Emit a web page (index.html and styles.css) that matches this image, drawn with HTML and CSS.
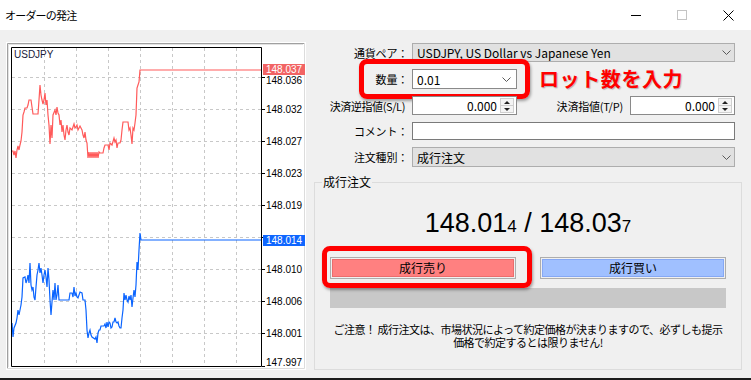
FILE: index.html
```html
<!DOCTYPE html>
<html lang="ja">
<head>
    <meta charset="UTF-8">
    <title>オーダーの発注</title>
    <link rel="stylesheet" href="styles.css">
</head>
<body>
    <div class="titlebar">
        <span class="title">オーダーの発注</span>
        <div class="caption-buttons">
            <span class="cap-btn"><svg width="10" height="10" viewBox="0 0 10 10"><path d="M0 5.5H10" stroke="#000"/></svg></span>
            <span class="cap-btn"><svg width="10" height="10" viewBox="0 0 10 10"><rect x="0.5" y="0.5" width="9" height="9" fill="none" stroke="#c4c4c4"/></svg></span>
            <span class="cap-btn"><svg width="11" height="11" viewBox="0 0 11 11"><path d="M0.5 0.5L10.5 10.5M10.5 0.5L0.5 10.5" stroke="#000"/></svg></span>
        </div>
    </div>

    <div class="content">
        <div class="chart-panel">
            <svg width="300" height="328" viewBox="6 42 300 328">
                <rect x="6" y="42" width="300" height="328" fill="#fff"/>
                <path d="M7.5 368V43.5H304" fill="none" stroke="#a0a0a0"/>
                <path d="M8.5 367V44.5H303" fill="none" stroke="#e3e3e3"/>
                <path d="M304.5 43V368.5H7" fill="none" stroke="#dcdcdc"/>

                <g stroke="#c8c8c8" stroke-dasharray="3 3">
                    <path d="M44.5 48V366M76.5 48V366M108.5 48V366M140.5 48V366M172.5 48V366M204.5 48V366M236.5 48V366"/>
                    <path d="M12 77.5H261M12 109.5H261M12 141.5H261M12 173.5H261M12 205.5H261M12 237.5H261M12 269.5H261M12 301.5H261M12 333.5H261"/>
                </g>

                <text x="14" y="58" class="symbol">USDJPY</text>

                <polyline class="ask" points="11,151 13,151 14,155 15,151 16,158 17,150 18,146 19,150 20,145 21,141 22,132 23,115 24,112 25,108 27,108 28,105 29,100 31,100 32,107 33,114 38,114 39,100 40,85 41,95 42,100 43,104 44,100 45,93 46,105 47,100 48,115 49,125 50,144 51,125 52,138 53,115 55,110 56,115 57,107 58,113 59,115 60,125 61,120 62,132 63,125 64,135 65,140 66,130 67,125 68,132 69,135 70,128 72,130 74,124 75,128 76,127 77,125 78,130 80,126 82,130 83,135 84,138 85,132 86,140 87,143 88,158 89,152 90,158 91,152 92,158 93,152 94,158 95,152 96,158 97,152 98,158 99,152 100,153 103,153 104,148 105,145 108,145 109,150 110,143 112,145 114,138 115,142 116,140 117,148 118,143 120,143 121,140 122,130 123,122 128,122 129,130 130,128 131,135 132,144 133,128 134,130 135,123 136,115 137,88 138,85 139,82 140,70 261,70"/>
                <polyline class="bid" points="12,323 13,337 14,328 16,323 17,318 18,310 19,315 20,310 21,305 22,297 23,278 25,277 26,283 27,280 28,275 29,283 30,263 31,285 32,290 33,287 34,297 35,300 36,287 37,275 38,270 39,263 40,273 41,268 42,275 43,283 44,275 45,270 46,277 47,287 48,268 49,280 50,300 51,315 52,302 53,290 54,300 55,283 56,300 57,295 58,285 59,300 69,300 70,293 72,293 73,297 74,287 75,296 76,293 77,297 78,298 80,292 82,293 83,300 85,300 86,310 87,330 88,338 89,333 90,330 91,335 92,337 95,339 96,337 97,343 98,333 99,330 100,330 101,326 104,326 105,324 106,328 107,322 108,327 109,322 110,323 111,328 112,327 113,322 114,322 115,318 116,322 117,323 118,322 119,326 120,328 121,328 122,318 123,310 124,293 125,300 126,295 127,300 128,302 129,296 130,300 131,295 132,307 133,298 134,290 135,297 136,285 137,262 138,270 139,250 140,233 141,240 261,240"/>

                <path d="M11.5 47.5H261.5V366.5H11.5Z" fill="none" stroke="#000"/>
                <path d="M262 77.5H265M262 109.5H265M262 141.5H265M262 173.5H265M262 205.5H265M262 237.5H265M262 269.5H265M262 301.5H265M262 333.5H265M262 366.5H265" stroke="#000"/>

                <g class="axis">
                    <text x="266" y="84">148.036</text>
                    <text x="266" y="113">148.032</text>
                    <text x="266" y="145">148.027</text>
                    <text x="266" y="177">148.023</text>
                    <text x="266" y="209">148.019</text>
                    <text x="266" y="273">148.010</text>
                    <text x="266" y="305">148.006</text>
                    <text x="266" y="337">148.001</text>
                    <text x="266" y="366">147.997</text>
                </g>

                <rect x="263" y="64" width="42" height="11" fill="#f26464"/>
                <text x="266" y="73" class="tag">148.037</text>
                <rect x="263" y="235" width="42" height="11" fill="#0f66ff"/>
                <text x="266" y="244" class="tag">148.014</text>
            </svg>
        </div>

        <div class="order-form">
            <div class="row row-symbol">
                <label class="lbl">通貨ペア：</label>
                <div class="combo">
                    <span>USDJPY, US Dollar vs Japanese Yen</span>
                    <svg class="chev" width="9" height="5" viewBox="0 0 9 5"><path d="M0.5 0.5L4.5 4.5L8.5 0.5" fill="none" stroke="#5a5a5a"/></svg>
                </div>
            </div>

            <div class="row row-volume">
                <label class="lbl">数量：</label>
                <div class="combo combo-volume">
                    <span>0.01</span>
                    <svg class="chev" width="9" height="5" viewBox="0 0 9 5"><path d="M0.5 0.5L4.5 4.5L8.5 0.5" fill="none" stroke="#5a5a5a"/></svg>
                </div>
                <span class="annotation">ロット数を入力</span>
                <span class="highlight highlight-volume"></span>
            </div>

            <div class="row row-stops">
                <label class="lbl lbl-sl">決済逆指値(S/L)</label>
                <div class="spin">
                    <span class="spin-val">0.000</span>
                    <span class="spin-arrows"><i class="up"></i><i class="down"></i></span>
                </div>
                <label class="lbl lbl-tp">決済指値(T/P)</label>
                <div class="spin">
                    <span class="spin-val">0.000</span>
                    <span class="spin-arrows"><i class="up"></i><i class="down"></i></span>
                </div>
            </div>

            <div class="row row-comment">
                <label class="lbl">コメント：</label>
                <div class="text-input"></div>
            </div>

            <div class="row row-type">
                <label class="lbl">注文種別：</label>
                <div class="combo">
                    <span>成行注文</span>
                    <svg class="chev" width="9" height="5" viewBox="0 0 9 5"><path d="M0.5 0.5L4.5 4.5L8.5 0.5" fill="none" stroke="#5a5a5a"/></svg>
                </div>
            </div>

            <fieldset class="group">
                <legend>成行注文</legend>
                <div class="price">148.01<span class="pip">4</span> / 148.03<span class="pip">7</span></div>
                <div class="trade-buttons">
                    <div class="trade-btn sell"><span>成行売り</span></div>
                    <div class="trade-btn buy"><span>成行買い</span></div>
                    <span class="highlight highlight-sell"></span>
                </div>
                <div class="progress"></div>
                <p class="notice"><span>ご注意！ 成行注文は、市場状況によって約定価格が決まりますので、必ずしも提示</span><span>価格で約定するとは限りません!</span></p>
            </fieldset>
        </div>
    </div>

    <div class="taskbar-edge"></div>
</body>
</html>
```

FILE: styles.css
```css
* {
    box-sizing: border-box;
}
body {
    margin: 0;
    width: 751px;
    height: 380px;
    overflow: hidden;
    background-color: #f0f0f0;
    color: #000;
    font-family: "Noto Sans CJK JP", "Liberation Sans", sans-serif;
    font-size: 12px;
    display: flex;
    flex-direction: column;
}
.titlebar {
    height: 30px;
    flex-shrink: 0;
    background-color: #fff;
    display: flex;
    align-items: center;
    padding-left: 5px;
}
.title {
    font-size: 11px;
    letter-spacing: -0.8px;
}
.caption-buttons {
    margin-left: auto;
    display: flex;
}
.cap-btn {
    width: 46px;
    height: 30px;
    display: flex;
    align-items: center;
    justify-content: center;
}
.content {
    flex: 1;
    display: flex;
    align-items: flex-start;
}
.chart-panel {
    margin: 12px 0 0 6px;
    width: 300px;
    height: 328px;
}
.chart-panel svg {
    display: block;
}
.chart-panel text {
    font-family: "Liberation Sans", sans-serif;
    font-size: 10px;
}
.symbol {
    fill: #1a1a3a;
}
.ask, .bid {
    fill: none;
    stroke-width: 1.2;
    stroke-linejoin: miter;
}
.ask {
    stroke: #ff5a5a;
}
.bid {
    stroke: #0a64ff;
}
.axis text {
    fill: #000;
}
.tag {
    fill: #fff;
}

/* order form */
.order-form {
    margin: 13px 0 0 8px;
    width: 428px;
}
.row {
    display: flex;
    align-items: center;
    padding-right: 7px;
    margin-bottom: 7px;
    position: relative;
}
.lbl {
    flex: 0 0 94px;
    margin-right: 4px;
    text-align: right;
    white-space: nowrap;
    font-size: 11px;
    letter-spacing: -0.2px;
}
.lbl-sl {
    padding-right: 3px;
    letter-spacing: -0.4px;
}
.lbl-tp {
    flex: 1;
    margin-right: 7px;
}
.combo {
    flex: 1;
    height: 19px;
    display: flex;
    align-items: center;
    padding: 0 3px 0 4px;
    border: 1px solid #adadad;
    background-color: #e1e1e1;
    white-space: nowrap;
}
.chev {
    margin-left: auto;
}
.row-volume .combo {
    height: 20px;
}
.combo-volume {
    flex: 0 0 105px;
    background-color: #fff;
    border-color: #8a8a8a;
    padding-right: 5px;
}
.row-type .combo {
    height: 20px;
}
.annotation {
    margin-left: 22px;
    color: #f00;
    font-size: 20px;
    font-weight: 700;
    letter-spacing: 0.6px;
    line-height: 20px;
    text-shadow: 1px 1px 1px rgba(0, 0, 0, 0.25);
}
.highlight {
    position: absolute;
    border: 5px solid #f00;
    border-radius: 8px;
    box-shadow: 1px 2px 3px rgba(0, 0, 0, 0.35);
}
.highlight-volume {
    left: 45px;
    top: -10px;
    width: 171px;
    height: 40px;
}
.spin {
    flex: 0 0 105px;
    height: 19px;
    display: flex;
    border: 1px solid #8a8a8a;
    background-color: #fff;
}
.spin-val {
    flex: 1;
    text-align: right;
    padding-right: 3px;
    line-height: 17px;
}
.spin-arrows {
    width: 14px;
    margin: 1px 2px 1px 0;
    display: flex;
    flex-direction: column;
    border: 1px solid #cfcfcf;
    background-color: #f4f4f4;
}
.spin-arrows i {
    flex: 1;
    display: flex;
    align-items: center;
    justify-content: center;
}
.spin-arrows i + i {
    border-top: 1px solid #cfcfcf;
}
.spin-arrows i::after {
    content: "";
    border-left: 3px solid transparent;
    border-right: 3px solid transparent;
}
.spin-arrows .up::after {
    border-bottom: 3px solid #222;
}
.spin-arrows .down::after {
    border-top: 3px solid #222;
}
.text-input {
    flex: 1;
    height: 18px;
    border: 1px solid #7a7a7a;
    background-color: #fff;
}
.row-type {
    margin-bottom: 8px;
}

/* market order group */
.group {
    margin: 0;
    padding: 0 15px;
    height: 195px;
    min-width: 0;
    border: 1px solid #dcdcdc;
}
.group legend {
    margin-left: -8px;
    padding: 0 1px;
    font-size: 12px;
    line-height: 14px;
}
.price {
    margin-top: 19px;
    text-align: center;
    font-family: "Liberation Sans", sans-serif;
    font-size: 27px;
    line-height: 30px;
}
.pip {
    font-size: 17px;
}
.trade-buttons {
    position: relative;
    margin-top: 15px;
    display: flex;
    justify-content: space-between;
}
.trade-btn {
    width: 186px;
    height: 22px;
    padding: 1px;
    border: 1px solid #adadad;
    background-color: #f0f0f0;
}
.trade-btn span {
    display: block;
    height: 18px;
    line-height: 16px;
    text-align: center;
}
.sell span {
    background-color: #ff8080;
    border: 1px solid #ec6c6c;
}
.buy span {
    background-color: #a0c0ff;
    border: 1px solid #86a8f4;
}
.highlight-sell {
    left: -8px;
    top: -11px;
    width: 210px;
    height: 42px;
}
.progress {
    margin-top: 9px;
    height: 20px;
    background-color: #c8c8c8;
}
.notice {
    margin: 15px 0 0;
    text-align: center;
    font-size: 11px;
    letter-spacing: -0.5px;
}
.notice span {
    display: block;
    height: 13px;
    line-height: 13px;
}
.taskbar-edge {
    height: 2px;
    flex-shrink: 0;
    background-color: #1c1c1c;
}
```
